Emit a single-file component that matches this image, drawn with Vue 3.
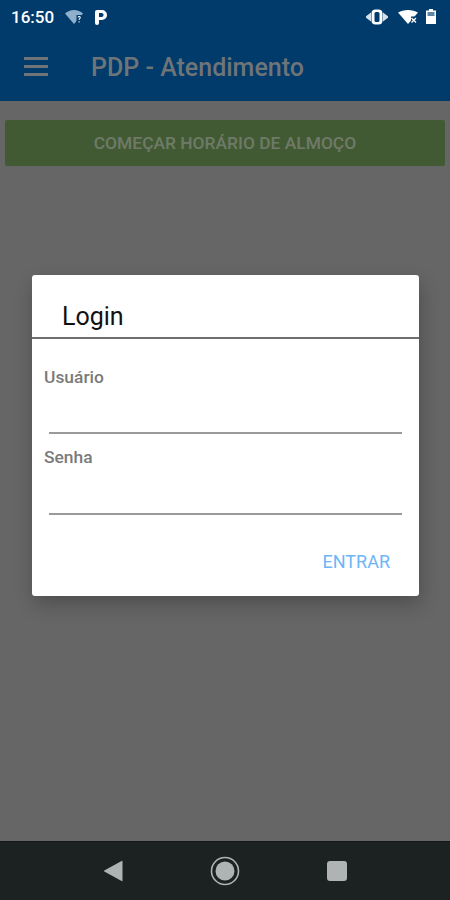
<template>
  <div class="screen">
    <header class="appbar">
      <div class="statusbar">
        <span class="time">16:50</span>
        <svg class="wifi-q" width="18" height="14" viewBox="0 0 18 14">
          <path d="M0 3.5C2.5 1.3 5.6 0 9 0s6.5 1.3 9 3.5L9 14z" fill="#8fb0cc" />
          <rect x="11.5" y="5" width="5" height="9" fill="#003b6c" />
          <path d="M12.6 7.6c0-1 .7-1.6 1.6-1.6s1.6.6 1.6 1.5c0 1.2-1.2 1.2-1.2 2.6h-1c0-1.8 1.2-1.8 1.2-2.6 0-.4-.2-.6-.6-.6s-.6.2-.6.7zM13.6 11.2h1v1.2h-1z" fill="#fff" />
        </svg>
        <svg class="parking" width="14" height="16" viewBox="0 0 14 16">
          <path fill-rule="evenodd" d="M1 3a2 2 0 0 1 2-2h5a5 5 0 0 1 0 10H5v3a1.500 1.500 0 0 1-4 0zM5 4v4h2.600a2 2 0 0 0 0-4z" fill="#fff" />
        </svg>
        <span class="spacer"></span>
        <svg class="vibrate" width="24" height="16" viewBox="0 0 24 16">
          <rect x="6.500" y="0.500" width="11" height="15" rx="4" fill="#fff" />
          <rect x="9.500" y="3" width="5" height="10" rx="1.500" fill="#003b6c" />
          <path d="M6 3.500v9L1 8.800V7.200zM18 3.500v9l5-3.700V7.200z" fill="#d5e0ea" />
        </svg>
        <svg class="wifi" width="20" height="14" viewBox="0 0 20 14">
          <path d="M0 2.600C2.800.9 6.200 0 10 0s7.200.9 10 2.600L10 14z" fill="#fff" />
          <rect x="13" y="6.500" width="6" height="7.500" fill="#003b6c" />
          <path d="M13.500 8l4.500 4.500M18 8l-4.500 4.500" stroke="#fff" stroke-width="1.300" />
        </svg>
        <svg class="battery" width="10" height="15" viewBox="0 0 10 15">
          <path d="M3 0h4v1.500h3V15H0V1.500h3z" fill="#fff" />
          <rect x="1.500" y="3" width="7" height="4" fill="#5f86a6" />
        </svg>
      </div>
      <div class="toolbar">
        <div class="burger">
          <span></span>
          <span></span>
          <span></span>
        </div>
        <h1 class="title">PDP - Atendimento</h1>
      </div>
    </header>

    <main class="content">
      <button class="lunch">COMEÇAR HORÁRIO DE ALMOÇO</button>
    </main>

    <nav class="navbar">
      <svg width="20" height="24" viewBox="0 0 20 24">
        <path d="M19.500 2.500v19a.6.6 0 0 1-.9.500L1.300 12.500a.6.6 0 0 1 0-1L18.600 2a.6.6 0 0 1 .9.500z" fill="#b0b3b4" />
      </svg>
      <svg width="30" height="30" viewBox="0 0 30 30">
        <circle cx="15" cy="15" r="13.500" fill="none" stroke="#b0b3b4" stroke-width="1.600" />
        <circle cx="15" cy="15" r="9.500" fill="#b0b3b4" />
      </svg>
      <svg width="22" height="22" viewBox="0 0 22 22">
        <rect x="1" y="1" width="20" height="20" rx="3" fill="#b0b3b4" />
      </svg>
    </nav>

    <div class="dialog">
      <h2 class="dialog-title">Login</h2>
      <div class="dialog-body">
        <div class="field" v-for="field in fields" :key="field">
          <label>{{ field }}</label>
          <div class="line"></div>
        </div>
      </div>
      <div class="actions">
        <button class="enter">ENTRAR</button>
      </div>
    </div>
  </div>
</template>

<script setup>
const fields = ['Usuário', 'Senha'];
</script>

<style>
html,
body {
  margin: 0;
  background: #666;
}
</style>

<style scoped>
.screen {
  position: relative;
  display: flex;
  flex-direction: column;
  width: 450px;
  height: 900px;
  overflow: hidden;
  background: #666;
  font-family: Roboto, "Liberation Sans", sans-serif;
}

.appbar {
  height: 101px;
  background: #003b6c;
  flex-shrink: 0;
}
.statusbar {
  display: flex;
  align-items: center;
  height: 33px;
  padding: 0 14px 0 11px;
  box-sizing: border-box;
}
.time {
  color: #fff;
  font-size: 17px;
  font-weight: 500;
}
.wifi-q {
  margin-left: 11px;
}
.parking {
  margin-left: 11px;
}
.spacer {
  flex: 1;
}
.wifi {
  margin-left: 9px;
}
.battery {
  margin-left: 8px;
}

.toolbar {
  display: flex;
  align-items: center;
  height: 67px;
}
.burger {
  display: flex;
  flex-direction: column;
  gap: 5px;
  width: 24px;
  margin-left: 24px;
}
.burger span {
  height: 3px;
  background: #6f7477;
}
.title {
  margin: 1px 0 0 43px;
  color: #6f7477;
  font-size: 25px;
  font-weight: 500;
}

.content {
  flex: 1;
  padding: 19px 5px 0;
}
.lunch {
  display: block;
  width: 100%;
  height: 46px;
  border: 0;
  border-radius: 2px;
  background: #425a33;
  color: #6f7a68;
  font-family: inherit;
  font-size: 17.400px;
  font-weight: 500;
}

.navbar {
  display: flex;
  align-items: center;
  justify-content: space-between;
  height: 59px;
  padding: 0 102px 0 103px;
  border-top: 1px solid #151819;
  box-sizing: border-box;
  background: #1c2122;
  flex-shrink: 0;
}

.dialog {
  position: absolute;
  top: 275px;
  left: 32px;
  width: 387px;
  height: 321px;
  border-radius: 3px;
  background: #fff;
  box-shadow: 2px 8px 20px rgba(0, 0, 0, 0.24);
}
.dialog-title {
  height: 62px;
  margin: 0;
  padding-left: 30px;
  border-bottom: 2px solid #6e6e6e;
  color: #111;
  font-size: 25px;
  font-weight: 400;
  line-height: 84px;
}
.dialog-body {
  padding: 29px 17px 0 12px;
}
.field {
  height: 80px;
}
.field + .field .line {
  margin-top: 47px;
}
.field label {
  display: block;
  height: 18px;
  color: #7a7a7a;
  font-size: 17.400px;
  font-weight: 500;
  line-height: 18px;
}
.line {
  height: 2px;
  margin: 46px 0 0 5px;
  background: #9a9a9a;
}
.actions {
  display: flex;
  justify-content: flex-end;
  padding: 23px 29px 0 0;
}
.enter {
  padding: 0;
  border: 0;
  background: none;
  color: #6db6f6;
  font-family: inherit;
  font-size: 18px;
  font-weight: 400;
}
</style>
